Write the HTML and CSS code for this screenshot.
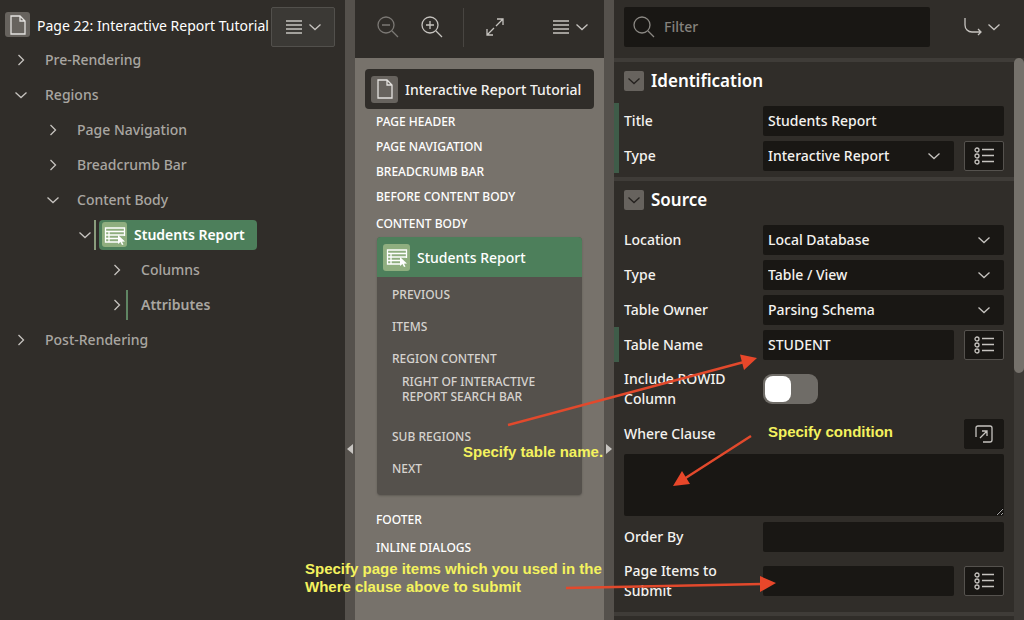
FILE: index.html
```html
<!DOCTYPE html>
<html lang="en">
<head>
  <meta charset="UTF-8">
  <title>Page Designer</title>
  <link rel="stylesheet" href="styles.css">
</head>
<body>
  <!-- shared icons -->
  <svg class="symbols" aria-hidden="true">
    <symbol id="i-right" viewBox="0 0 12 12"><path d="M3.500 1l5 5-5 5"/></symbol>
    <symbol id="i-down" viewBox="0 0 12 12"><path d="M0.500 3.500l5.500 5 5.500-5"/></symbol>
    <symbol id="i-menu" viewBox="0 0 16 14"><path d="M0 1h16M0 5h16M0 9h16M0 13h16"/></symbol>
    <symbol id="i-page" viewBox="0 0 16 20"><path d="M1 1h9l5 5v13H1zM10 1v5h5"/></symbol>
    <symbol id="i-report" viewBox="0 0 22 20">
      <path d="M14 17H1.500V3H20.500V11M1.500 6.500h19M1.500 10h19M1.500 13.500h13M5 6.500V17"/>
      <path class="solid" d="M14 10l7 6.500-3 .3 1.500 2.700-1.500.5-1.500-3-2.500 2z"/>
    </symbol>
    <symbol id="i-list" viewBox="0 0 20 18">
      <circle cx="3" cy="3" r="2"/><circle cx="3" cy="9" r="2"/><circle cx="3" cy="15" r="2"/>
      <path d="M8 2.500h12M8 8.500h12M8 14.500h12"/>
    </symbol>
    <symbol id="i-minus" viewBox="0 0 22 22"><circle cx="9" cy="9" r="8"/><path d="M5 9h8M15 15l6 6"/></symbol>
    <symbol id="i-plus" viewBox="0 0 22 22"><circle cx="9" cy="9" r="8"/><path d="M5 9h8M9 5v8M15 15l6 6"/></symbol>
    <symbol id="i-search" viewBox="0 0 22 22"><circle cx="9" cy="9" r="8"/><path d="M15 15l6 6"/></symbol>
    <symbol id="i-expand" viewBox="0 0 18 18"><path d="M11 1h6v6M17 1l-7 7M7 17H1v-6M1 17l7-7"/></symbol>
    <symbol id="i-goto" viewBox="0 0 20 20"><path d="M1 1v7c0 4 3 7 7 7h9M14 12l3 3-3 3"/></symbol>
    <symbol id="i-popup" viewBox="0 0 18 18"><path d="M1 12V3q0-2 2-2h12q2 0 2 2v12q0 2-2 2H8M5 13l7-7M7 6h5v5"/></symbol>
  </svg>

  <div class="designer">
    <aside class="tree-pane">
      <header class="tree-head">
        <span class="tile"><svg class="page-icon"><use href="#i-page"/></svg></span>
        <h1>Page 22: Interactive Report Tutorial</h1>
        <button class="menu-btn boxed" type="button" aria-label="Tree menu">
          <svg class="menu-icon"><use href="#i-menu"/></svg>
          <svg class="chevron"><use href="#i-down"/></svg>
        </button>
      </header>
      <ul class="tree">
        <li>
          <div class="node"><svg class="chevron"><use href="#i-right"/></svg><span class="name">Pre-Rendering</span></div>
        </li>
        <li>
          <div class="node"><svg class="chevron"><use href="#i-down"/></svg><span class="name">Regions</span></div>
          <ul>
            <li><div class="node"><svg class="chevron"><use href="#i-right"/></svg><span class="name">Page Navigation</span></div></li>
            <li><div class="node"><svg class="chevron"><use href="#i-right"/></svg><span class="name">Breadcrumb Bar</span></div></li>
            <li>
              <div class="node"><svg class="chevron"><use href="#i-down"/></svg><span class="name">Content Body</span></div>
              <ul>
                <li>
                  <div class="node changed selected">
                    <svg class="chevron"><use href="#i-down"/></svg>
                    <span class="name"><span class="tile green"><svg class="report-icon"><use href="#i-report"/></svg></span>Students Report</span>
                  </div>
                  <ul>
                    <li><div class="node"><svg class="chevron"><use href="#i-right"/></svg><span class="name">Columns</span></div></li>
                    <li><div class="node changed"><svg class="chevron"><use href="#i-right"/></svg><span class="name">Attributes</span></div></li>
                  </ul>
                </li>
              </ul>
            </li>
          </ul>
        </li>
        <li>
          <div class="node"><svg class="chevron"><use href="#i-right"/></svg><span class="name">Post-Rendering</span></div>
        </li>
      </ul>
    </aside>

    <div class="splitter"><svg viewBox="0 0 6 10"><path d="M6 0v10L0 5z"/></svg></div>

    <main class="layout-pane">
      <div class="layout-tools">
        <button class="tool dim" type="button" aria-label="Zoom out"><svg class="zoom-icon"><use href="#i-minus"/></svg></button>
        <button class="tool" type="button" aria-label="Zoom in"><svg class="zoom-icon"><use href="#i-plus"/></svg></button>
        <span class="divider"></span>
        <button class="tool" type="button" aria-label="Expand"><svg class="expand-icon"><use href="#i-expand"/></svg></button>
        <button class="menu-btn" type="button" aria-label="Layout menu">
          <svg class="menu-icon"><use href="#i-menu"/></svg>
          <svg class="chevron"><use href="#i-down"/></svg>
        </button>
      </div>
      <div class="layout-body">
        <h2 class="page-title"><span class="tile"><svg class="page-icon"><use href="#i-page"/></svg></span>Interactive Report Tutorial</h2>
        <div class="slot">PAGE HEADER</div>
        <div class="slot">PAGE NAVIGATION</div>
        <div class="slot">BREADCRUMB BAR</div>
        <div class="slot">BEFORE CONTENT BODY</div>
        <div class="slot tall">CONTENT BODY</div>
        <section class="region">
          <h3><span class="tile green"><svg class="report-icon"><use href="#i-report"/></svg></span>Students Report</h3>
          <div class="region-slot">PREVIOUS</div>
          <div class="region-slot">ITEMS</div>
          <div class="region-slot">REGION CONTENT</div>
          <div class="sub-slot">RIGHT OF INTERACTIVE REPORT SEARCH BAR</div>
          <div class="region-slot">SUB REGIONS</div>
          <div class="region-slot">NEXT</div>
        </section>
        <div class="slot tall">FOOTER</div>
        <div class="slot tall">INLINE DIALOGS</div>
      </div>
    </main>

    <div class="splitter"><svg viewBox="0 0 6 10"><path d="M0 0v10l6-5z"/></svg></div>

    <aside class="props-pane">
      <div class="props-tools">
        <label class="filter">
          <svg class="zoom-icon"><use href="#i-search"/></svg>
          <input type="text" placeholder="Filter" aria-label="Filter">
        </label>
        <button class="menu-btn" type="button" aria-label="Go to group">
          <svg class="goto-icon"><use href="#i-goto"/></svg>
          <svg class="chevron"><use href="#i-down"/></svg>
        </button>
      </div>
      <div class="props-scroll">
        <form class="props">
          <section class="group">
            <h2><button class="collapse" type="button" aria-label="Collapse Identification"><svg class="chevron"><use href="#i-down"/></svg></button>Identification</h2>
            <div class="row set">
              <label for="title">Title</label>
              <input type="text" id="title" value="Students Report">
            </div>
            <div class="row set">
              <label for="type">Type</label>
              <div class="select"><select id="type"><option>Interactive Report</option></select><svg class="chevron"><use href="#i-down"/></svg></div>
              <button class="pick" type="button" aria-label="Choose type"><svg class="list-icon"><use href="#i-list"/></svg></button>
            </div>
          </section>
          <section class="group">
            <h2><button class="collapse" type="button" aria-label="Collapse Source"><svg class="chevron"><use href="#i-down"/></svg></button>Source</h2>
            <div class="row">
              <label for="location">Location</label>
              <div class="select"><select id="location"><option>Local Database</option></select><svg class="chevron"><use href="#i-down"/></svg></div>
            </div>
            <div class="row">
              <label for="srcType">Type</label>
              <div class="select"><select id="srcType"><option>Table / View</option></select><svg class="chevron"><use href="#i-down"/></svg></div>
            </div>
            <div class="row">
              <label for="owner">Table Owner</label>
              <div class="select"><select id="owner"><option>Parsing Schema</option></select><svg class="chevron"><use href="#i-down"/></svg></div>
            </div>
            <div class="row set">
              <label for="table">Table Name</label>
              <input type="text" id="table" value="STUDENT">
              <button class="pick" type="button" aria-label="Choose table"><svg class="list-icon"><use href="#i-list"/></svg></button>
            </div>
            <div class="row double">
              <label for="rowid">Include ROWID Column</label>
              <input type="checkbox" class="switch" id="rowid">
            </div>
            <div class="row">
              <label for="where">Where Clause</label>
              <button class="pick plain" type="button" aria-label="Open code editor"><svg class="popup-icon"><use href="#i-popup"/></svg></button>
            </div>
            <div class="area">
              <textarea id="where"></textarea>
            </div>
            <div class="row">
              <label for="order">Order By</label>
              <input type="text" id="order">
            </div>
            <div class="row double">
              <label for="items">Page Items to Submit</label>
              <input type="text" id="items">
              <button class="pick" type="button" aria-label="Choose items"><svg class="list-icon"><use href="#i-list"/></svg></button>
            </div>
          </section>
          <section class="group"></section>
        </form>
        <div class="scrollbar"><div class="thumb"></div></div>
      </div>
    </aside>

    <!-- tutorial notes on top of the designer -->
    <div class="notes">
      <svg class="arrows" viewBox="0 0 1024 620">
        <path d="M508 425L744 362M751 436L684 479M566 588L762 584"/>
        <path class="head" d="M757 358L740 354.500 744 370zM673 486L682 471 690 484zM776 583L760 576V592z"/>
      </svg>
      <p class="note note-table">Specify table name.</p>
      <p class="note note-where">Specify condition</p>
      <p class="note note-items">Specify page items which you used in the<br>Where clause above to submit</p>
    </div>
  </div>
</body>
</html>
```
FILE: styles.css
```css
* { box-sizing: border-box; }
html, body { height: 100%; margin: 0; }
body {
  background: #302d29; color: #f4f2ef; overflow: hidden;
  font: 500 14px/20px "Noto Sans", "Open Sans", sans-serif;
}
h1, h2, h3, p, ul { margin: 0; padding: 0; }
ul { list-style: none; }
button, input, select, textarea { font: inherit; color: inherit; }
button { background: none; border: 0; padding: 0; cursor: pointer; }
svg { fill: none; stroke: #c6c3bf; stroke-width: 1.3; flex: none; }
.symbols { display: none; }
.solid { fill: #fff; stroke: none; }

/* icon sizes */
.chevron { width: 12px; height: 12px; }
.menu-icon { width: 16px; height: 14px; }
.page-icon { width: 16px; height: 20px; stroke: #e4e2df; }
.report-icon { width: 22px; height: 20px; stroke: #fff; }
.list-icon { width: 20px; height: 18px; }
.zoom-icon { width: 22px; height: 22px; }
.expand-icon { width: 18px; height: 18px; }
.goto-icon { width: 20px; height: 20px; }
.popup-icon { width: 18px; height: 18px; }

.designer {
  position: relative; display: grid; height: 100%; overflow: hidden;
  grid-template-columns: 345fr 10px 249fr 10px 410fr;
}
.tile {
  display: flex; align-items: center; justify-content: center; flex: none;
  width: 25px; height: 25px; border-radius: 3px; background: #67635e;
}
.tile.green { background: #8fae7f; }
.menu-btn { display: flex; align-items: center; justify-content: center; gap: 7px; width: 64px; height: 40px; }
.menu-btn.boxed { background: #3b3935; border: 1px solid #52504c; border-radius: 2px; }

/* tree */
.tree-pane { min-width: 0; }
.tree-head { display: flex; align-items: flex-start; height: 42px; padding: 7px 10px 0 5px; }
.tree-head .tile { margin-top: 5px; }
.tree-head h1 { flex: 1; min-width: 0; padding: 9px 0 0 7px; font-size: 14px; font-weight: 400; white-space: nowrap; color: #fff; }
.tree ul { padding-left: 32px; }
.tree > li { padding-left: 15px; }
.node { display: flex; align-items: center; height: 35px; color: #a9a6a1; }
.node .name { margin-left: 18px; }
.node.changed .name { position: relative; font-weight: 600; }
.node.changed .name::before {
  content: ""; position: absolute; left: -15px; top: -5px;
  width: 2px; height: 30px; background: #5f8563;
}
.node.selected .name {
  display: flex; align-items: center; gap: 7px; height: 30px; margin-left: 8px;
  padding: 0 12px 0 3px; border-radius: 4px; background: #4d7f5b; color: #fff;
}
.node.selected .name::before { left: -5px; top: 0; background: #8a9c7c; }

.splitter { display: flex; align-items: center; justify-content: center; padding-top: 278px; background: #55514c; }
.splitter svg { width: 6px; height: 10px; fill: #c9c6c2; stroke: none; }

/* page layout */
.layout-pane { display: flex; flex-direction: column; min-width: 0; background: #77726b; }
.layout-tools { display: flex; align-items: center; height: 58px; padding: 0 10px 4px 22px; background: #302d29; }
.tool { display: flex; width: 22px; margin-right: 22px; }
.tool.dim { opacity: .5; }
.divider { width: 1px; height: 39px; margin: 0 22px 0 -2px; background: #484541; }
.layout-tools .menu-btn { margin-left: auto; width: 48px; }
.layout-body { flex: 1; padding: 11px 10px 0; font-size: 12px; line-height: 15px; }
.page-title {
  display: flex; align-items: center; gap: 7px; height: 40px; padding: 0 6px;
  border-radius: 4px; background: #302d29; font-size: 14px; font-weight: 500;
}
.page-title .tile, .region h3 .tile { width: 27px; height: 27px; }
.slot { display: flex; align-items: center; height: 25px; padding-left: 11px; color: #fff; }
.slot.tall { height: 28px; }
.region { margin: 0 12px 10px; padding-bottom: 11px; border-radius: 4px; overflow: hidden; background: #55514c; box-shadow: 0 1px 2px #5f5b55; }
.region h3 {
  display: flex; align-items: center; gap: 7px; height: 40px; margin-bottom: 1px; padding: 0 6px;
  background: #4d7f5b; font-size: 14px; font-weight: 500; color: #fff;
}
.region-slot { display: flex; align-items: center; height: 32px; padding-left: 15px; color: #d6d3cf; }
.sub-slot { margin: 0 25px 16px; color: #d6d3cf; }

/* property editor */
.props-pane { display: flex; flex-direction: column; min-width: 0; min-height: 0; }
.props-tools { display: flex; flex: none; align-items: center; justify-content: space-between; height: 58px; padding: 0 20px 4px 10px; }
.filter { display: flex; align-items: center; gap: 9px; width: 306px; height: 40px; padding: 0 9px; border-radius: 2px; background: #191714; }
.filter svg { stroke: #8b8883; }
.filter input { flex: 1; min-width: 0; padding: 0; border: 0; background: none; }
.filter input::placeholder { color: #85827d; opacity: 1; }
.props-tools .menu-btn { width: 44px; gap: 4px; }
.props-scroll { flex: 1; min-height: 0; display: grid; grid-template-columns: 1fr 10px; }
.props { overflow: hidden; }
.scrollbar { background: #3d3a36; }
.thumb { height: 56%; border-radius: 5px; background: #75716b; }
.group { padding-bottom: 4px; border-top: 4px solid #3f3c38; }
.group h2 { display: flex; align-items: center; gap: 7px; height: 38px; margin-bottom: 3px; padding: 0 10px; font-size: 17px; font-weight: 600; color: #fff; }
.collapse { display: flex; align-items: center; justify-content: center; width: 20px; height: 20px; border-radius: 2px; background: #67635e; }
.collapse svg { stroke: #24211e; }
.row { display: flex; align-items: center; gap: 10px; height: 35px; padding: 0 10px; }
.row.set { box-shadow: inset 5px 0 #3f5c49; }
.row.double { height: 54px; }
.row label { flex: none; width: 129px; padding-right: 10px; }
.row input[type=text], .select { flex: 1; min-width: 0; height: 30px; border: 0; border-radius: 2px; background: #191714; }
.row input[type=text] { padding: 0 5px; }
.select { display: grid; align-items: center; grid-template-columns: 1fr 26px; }
.select select {
  grid-area: 1 / 1 / 2 / 3; height: 30px; padding: 0 5px;
  border: 0; background: none; appearance: none;
}
.select svg { grid-area: 1 / 2; pointer-events: none; }
.pick { display: flex; align-items: center; justify-content: center; width: 40px; height: 30px; border: 1px solid #55524e; border-radius: 2px; background: #191714; }
.pick.plain { margin-left: auto; border-color: #191714; }
.switch { position: relative; width: 55px; height: 30px; margin: 0; border-radius: 9px; background: #6f6c67; appearance: none; }
.switch::before { content: ""; position: absolute; left: 2px; top: 2px; width: 26px; height: 26px; border-radius: 8px; background: #fff; }
.area { padding: 3px 10px; }
.area textarea { display: block; width: 100%; height: 62px; border: 0; border-radius: 2px; background: #191714; resize: vertical; color-scheme: dark; }

/* notes */
.notes { position: absolute; top: 0; left: 0; width: 1024px; height: 620px; pointer-events: none; }
.arrows { position: absolute; width: 1024px; height: 620px; stroke: #e2492c; stroke-width: 2.5; }
.arrows .head { fill: #e8472a; stroke: none; }
.note { position: absolute; font: bold 15px/18px "Liberation Sans", Arial, sans-serif; color: #f4f25e; white-space: nowrap; }
.note-table { left: 463px; top: 443px; }
.note-where { left: 768px; top: 423px; }
.note-items { left: 305px; top: 560px; }
```
